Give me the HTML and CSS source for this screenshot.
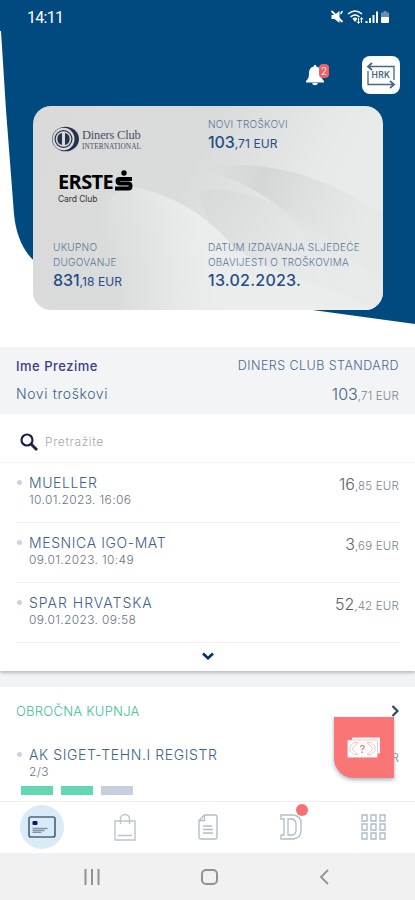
FILE: index.html
```html
<!DOCTYPE html>
<html lang="hr">
<head>
<meta charset="UTF-8">
<meta name="viewport" content="width=device-width, initial-scale=1.0">
<title>Erste Card Club</title>
<link rel="stylesheet" href="styles.css">
</head>
<body>

<div class="app">
    <header class="hero">
        <svg class="hero-bg" viewBox="0 0 415 347">
            <path d="M0 0H415V324L62 276C32 268 17 246 14 214L6 110L1 31H0Z" fill="#004a80"/>
        </svg>

        <div class="status">
            <span>14:11</span>
            <svg width="62" height="16" viewBox="0 0 62 16" fill="#fff">
                <path d="M1 6h3l5-4v12l-5-4H1z"/>
                <path d="M1 2l11 11" stroke="#fff" stroke-width="1.8"/>
                <path d="M10 5l2-3" stroke="#fff" stroke-width="1.4"/>
                <g fill="none" stroke="#fff" stroke-width="1.5">
                    <path d="M17.500 5q7-6 14 0M20 8q4.500-4 9 0"/>
                </g>
                <path d="M22 9.500q2.500-2 5 0L24.500 13z"/>
                <path d="M28 9v5M26.500 12.500L28 14.500l1.500-2M31 14V9M29.800 10.500L31 8.500l1.300 2" stroke="#fff" fill="none"/>
                <path d="M35 12h2v2h-2zM38.500 9h2v5h-2zM42 6h2v8h-2z"/>
                <path d="M45.500 2.500h2V14h-2z"/>
                <path d="M53 2h3v1.500h2.500V8H50.500V3.500H53z" opacity=".4"/>
                <path d="M50.500 8h8v5q0 1-1 1h-6q-1 0-1-1z"/>
            </svg>
        </div>

        <div class="actions">
            <div class="bell">
                <svg width="20" height="22" viewBox="0 0 20 22" fill="#fff">
                    <path d="M10 1c1 0 1.300.700 1.300 1.600C14.500 3.300 16 6 16 9c0 4.500 1 6 3 8v1.500H1V17c2-2 3-3.500 3-8 0-3 1.500-5.700 4.700-6.400C8.700 1.700 9 1 10 1zM7.300 19h5.400c0 3-5.400 3-5.400 0z"/>
                </svg>
                <span class="bell-count">2</span>
            </div>
            <button class="currency">
                <svg width="30" height="28" viewBox="0 0 30 28" fill="none" stroke="#456684" stroke-width="1.300">
                    <path d="M2 5.500H28V19M28 23.500H2V10"/>
                    <path d="M6 2L2 5.500L6 9M24 20L28 23.500L24 27" stroke-width="1.800"/>
                </svg>
                <span>HRK</span>
            </button>
        </div>

        <section class="card">
            <svg class="card-bg" viewBox="0 0 350 204">
                <defs>
                    <linearGradient id="base" x1="0" y1="0" x2="1" y2="0.300">
                        <stop offset="0" stop-color="#dadada"/>
                        <stop offset=".5" stop-color="#dadbdb"/>
                        <stop offset=".85" stop-color="#e8e9e9"/>
                        <stop offset="1" stop-color="#e9ebeb"/>
                    </linearGradient>
                    <linearGradient id="glow" gradientUnits="userSpaceOnUse" x1="70" y1="140" x2="165" y2="115">
                        <stop offset="0" stop-color="#eceded" stop-opacity="0"/>
                        <stop offset="1" stop-color="#ebecec"/>
                    </linearGradient>
                    <linearGradient id="fold" gradientUnits="userSpaceOnUse" x1="170" y1="60" x2="330" y2="120">
                        <stop offset="0" stop-color="#d3d4d4" stop-opacity="0"/>
                        <stop offset=".35" stop-color="#d5d6d6"/>
                        <stop offset="1" stop-color="#e4e6e6" stop-opacity=".5"/>
                    </linearGradient>
                    <linearGradient id="sheet" gradientUnits="userSpaceOnUse" x1="190" y1="90" x2="290" y2="165">
                        <stop offset="0" stop-color="#d8d9d9"/>
                        <stop offset="1" stop-color="#e9ebeb"/>
                    </linearGradient>
                </defs>
                <rect width="350" height="204" fill="url(#base)"/>
                <path d="M165 62Q255 46 350 108V204H305C285 130 250 85 165 62Z" fill="url(#fold)"/>
                <path d="M165 84Q235 76 305 145L350 175V204H220L180 130Z" fill="url(#sheet)" opacity=".7"/>
                <path d="M95 80C140 88 172 108 198 138Q222 158 270 175L350 204H20Q40 110 95 80Z" fill="url(#glow)"/>
            </svg>
            <div class="card-row">
                <div class="logos">
                    <div class="diners">
                        <svg width="29" height="26" viewBox="0 0 29 26">
                            <ellipse cx="14.500" cy="13" rx="13.500" ry="12.300" fill="#26334f"/>
                            <ellipse cx="12.500" cy="13" rx="11" ry="11.300" fill="#dadada"/>
                            <circle cx="12.500" cy="13" r="9" fill="#26334f"/>
                            <circle cx="12.500" cy="13" r="7.800" fill="#dadada"/>
                            <path d="M11 7v12a6.200 6.200 0 0 1 0-12zM14 7v12a6.200 6.200 0 0 0 0-12z" fill="#26334f"/>
                        </svg>
                        <div>
                            <div class="diners-name">Diners Club</div>
                            <div class="diners-sub">INTERNATIONAL</div>
                        </div>
                    </div>
                    <div class="erste">
                        <span>ERSTE</span>
                        <svg width="18" height="22" viewBox="0 0 18 22">
                            <circle cx="9" cy="3" r="2.700"/>
                            <path d="M17 9H4.500Q2.500 9 2.500 11t2 2.500h9Q15.500 13.500 15.500 16T13.500 18.500H0" fill="none" stroke="#000" stroke-width="4"/>
                        </svg>
                    </div>
                    <div class="erste-sub">Card Club</div>
                </div>
                <div>
                    <div class="label">NOVI TROŠKOVI</div>
                    <div class="sum">103<small>,71 EUR</small></div>
                </div>
            </div>
            <div class="card-row">
                <div>
                    <div class="label">UKUPNO<br>DUGOVANJE</div>
                    <div class="sum">831<small>,18 EUR</small></div>
                </div>
                <div>
                    <div class="label">DATUM IZDAVANJA SLJEDEĆE<br>OBAVIJESTI O TROŠKOVIMA</div>
                    <div class="sum date">13.02.2023.</div>
                </div>
            </div>
        </section>
    </header>

    <section class="account">
        <div class="line"><span class="owner">Ime Prezime</span><span class="product">DINERS CLUB STANDARD</span></div>
        <div class="line"><span class="costs">Novi troškovi</span><span class="amount blue">103<small>,71 EUR</small></span></div>
    </section>

    <section class="list">
        <div class="search">
            <svg width="18" height="18" viewBox="0 0 18 18" fill="none" stroke="#1d2145">
                <circle cx="7" cy="7" r="5.500" stroke-width="2.200"/>
                <path d="M11 11l6 6" stroke-width="2.800"/>
            </svg>
            <span>Pretražite</span>
        </div>
        <div class="item">
            <div class="name">MUELLER</div>
            <div class="amount">16<small>,85 EUR</small></div>
            <div class="time">10.01.2023. 16:06</div>
        </div>
        <div class="item">
            <div class="name">MESNICA IGO-MAT</div>
            <div class="amount">3<small>,69 EUR</small></div>
            <div class="time">09.01.2023. 10:49</div>
        </div>
        <div class="item">
            <div class="name spar">SPAR HRVATSKA</div>
            <div class="amount">52<small>,42 EUR</small></div>
            <div class="time">09.01.2023. 09:58</div>
        </div>
        <div class="more">
            <svg width="12" height="9" viewBox="0 0 12 9" fill="none" stroke="#062e70" stroke-width="2.600"><path d="M1 1.500l5 4.800 5-4.800"/></svg>
        </div>
    </section>

    <section class="installments">
        <div class="inst-head">
            <span>OBROČNA KUPNJA</span>
            <svg width="8" height="12" viewBox="0 0 8 12" fill="none" stroke="#2d4860" stroke-width="2.200"><path d="M1.500 1l5 5-5 5"/></svg>
        </div>
        <div class="item inst">
            <div class="name">AK SIGET-TEHN.I REGISTR</div>
            <div class="amount"><small>EUR</small></div>
            <div class="time">2/3</div>
        </div>
        <div class="progress"><i class="done"></i><i class="done"></i><i></i></div>
        <button class="fab">
            <svg width="34" height="21" viewBox="0 0 34 21">
                <rect x="5" y="0.500" width="28" height="16" rx="1" fill="#fff"/>
                <rect x="0.500" y="3" width="30" height="17.500" rx="1" fill="#fff" stroke="#f8a9a9" stroke-width=".7"/>
                <path d="M3 9l4-3.500h4L5 12l6 5.500H7L3 14zM28 9l-4-3.500h-4L26 12l-6 5.500h4L28 14z" fill="none" stroke="#f9b4b4" stroke-width=".8"/>
                <text x="15.500" y="16" text-anchor="middle">?</text>
            </svg>
        </button>
    </section>

    <nav class="tabs">
        <div class="tab active">
            <svg width="28" height="22" viewBox="0 0 28 22">
                <rect x="1" y="1" width="26" height="20" rx="2" fill="none" stroke="#536779" stroke-width="1.700"/>
                <rect x="4.500" y="5" width="5" height="4" rx="1" fill="#10156b"/>
                <path d="M4.500 12.500h15M4.500 14.500h12M4.500 16.300h9" stroke="#8296a5" stroke-width="1.300"/>
            </svg>
        </div>
        <div class="tab">
            <svg width="24" height="28" viewBox="0 0 24 28" fill="none" stroke="#bac4cc" stroke-width="1.400">
                <path d="M2 8h20v19H2zM7.500 11V6a4.500 4.500 0 0 1 9 0v5M5 22.500h14"/>
            </svg>
        </div>
        <div class="tab">
            <svg width="20" height="26" viewBox="0 0 20 26" fill="none" stroke="#b2bec8" stroke-width="1.400">
                <path d="M6.500 1H17q2 0 2 2v20q0 2-2 2H3q-2 0-2-2V6.500zM6.500 1v5.500H1M5 12h9M5 15.500h10M5 19h10"/>
            </svg>
        </div>
        <div class="tab">
            <svg width="22" height="26" viewBox="0 0 22 26" fill="none" stroke="#afbdc9" stroke-width="1.300">
                <path d="M1 1h12q8 1 8 8v8q0 7-8 8H1v-4h3V5H1zM8 5v16h4q4-.500 4-5v-6q0-4.500-4-5z"/>
            </svg>
            <span class="dot"></span>
        </div>
        <div class="tab">
            <svg width="25" height="26" viewBox="0 0 25 26" fill="none" stroke="#b0bcc8" stroke-width="1.400">
                <path d="M1 1h5v6H1zM10 1h5v6h-5zM19 1h5v6h-5zM1 10h5v6H1zM10 10h5v6h-5zM19 10h5v6h-5zM1 19h5v6H1zM10 19h5v6h-5zM19 19h5v6h-5z"/>
            </svg>
        </div>
    </nav>

    <div class="system">
        <svg width="16" height="16" viewBox="0 0 16 16" stroke="#929292" stroke-width="2"><path d="M1.500 0v16M8 0v16M14.500 0v16"/></svg>
        <svg width="17" height="16" viewBox="0 0 17 16" fill="none" stroke="#929292" stroke-width="2"><rect x="1" y="1" width="15" height="14" rx="4"/></svg>
        <svg width="10" height="16" viewBox="0 0 10 16" fill="none" stroke="#929292" stroke-width="1.800"><path d="M9 1L2 8l7 7"/></svg>
    </div>
</div>

</body>
</html>
```

FILE: styles.css
```css
* {
    box-sizing: border-box;
}
body {
    margin: 0;
    background-color: #fff;
    font-family: "Inter", "Liberation Sans", sans-serif;
    font-weight: 300;
    color: #69747f;
}
button {
    border: none;
    padding: 0;
    font-family: inherit;
}
svg {
    display: block;
    flex: none;
}
.app {
    width: 415px;
    height: 900px;
    overflow: hidden;
    display: flex;
    flex-direction: column;
}

/* header */
.hero {
    position: relative;
    height: 347px;
    flex: none;
}
.hero-bg {
    position: absolute;
    top: 0;
    left: 0;
    width: 415px;
    height: 347px;
}
.status {
    position: relative;
    height: 34px;
    padding: 0 22px 0 27px;
    display: flex;
    justify-content: space-between;
    align-items: center;
    color: #fff;
    font-family: Roboto, sans-serif;
    font-size: 16px;
    font-weight: 400;
    letter-spacing: -0.7px;
}
.status svg {
    width: 63px;
}
.actions {
    position: relative;
    height: 72px;
    padding: 22px 15px 0 0;
    display: flex;
    justify-content: flex-end;
    gap: 37px;
}
.bell {
    position: relative;
    width: 20px;
    margin-top: 8px;
}
.bell-count {
    position: absolute;
    top: 0;
    left: 14px;
    width: 10px;
    height: 14px;
    border-radius: 4px;
    background-color: #ee6265;
    color: #fff;
    font-size: 10px;
    line-height: 14px;
    text-align: center;
}
.currency {
    position: relative;
    width: 38px;
    height: 38px;
    border-radius: 8px;
    background-color: #fff;
    display: grid;
    place-items: center;
}
.currency > * {
    grid-area: 1 / 1;
}
.currency span {
    font-size: 8.5px;
    font-weight: 600;
    color: #456684;
    letter-spacing: 0.3px;
}

/* card */
.card {
    position: relative;
    width: 350px;
    height: 204px;
    margin-left: 33px;
    padding: 11px 0 18px 20px;
    border-radius: 18px;
    overflow: hidden;
    display: flex;
    flex-direction: column;
    justify-content: space-between;
    color: #234d87;
}
.card-bg {
    position: absolute;
    top: 0;
    left: 0;
    width: 350px;
    height: 204px;
}
.card-row {
    position: relative;
    display: grid;
    grid-template-columns: 155px 1fr;
    white-space: nowrap;
}
.label {
    font-size: 10px;
    line-height: 15px;
    letter-spacing: 0.27px;
    color: #58769a;
}
.sum {
    font-size: 16px;
    font-weight: 500;
    line-height: 20px;
    letter-spacing: -0.1px;
}
.sum small {
    font-size: 12px;
    font-weight: 400;
    letter-spacing: 0.1px;
}
.sum.date {
    letter-spacing: 0.25px;
}
.diners {
    display: flex;
    gap: 2px;
    margin: 9px 0 0 -2px;
    color: #465164;
    font-family: "Liberation Serif", serif;
    font-weight: 400;
}
.diners-name {
    font-size: 12.5px;
    line-height: 15px;
    margin-top: 2px;
    letter-spacing: -0.2px;
}
.diners-sub {
    font-size: 7.3px;
    line-height: 8px;
    letter-spacing: 0.05px;
}
.erste {
    display: flex;
    align-items: flex-end;
    gap: 2px;
    margin: 18px 0 0 5px;
    color: #000;
    font-family: "Open Sans", sans-serif;
    font-size: 20px;
    font-weight: 700;
    line-height: 20px;
    letter-spacing: -0.6px;
}
.erste-sub {
    margin: 1px 0 0 5px;
    color: #333;
    font-size: 8.5px;
    font-weight: 400;
    line-height: 12px;
    letter-spacing: -0.1px;
}

/* account summary */
.account {
    height: 67px;
    flex: none;
    padding: 8px 16px 0;
    background-color: #f2f4f6;
}
.line {
    display: flex;
    justify-content: space-between;
    align-items: center;
    height: 21px;
    margin-bottom: 7px;
}
.owner {
    font-size: 13px;
    font-weight: 500;
    color: #383d84;
    letter-spacing: 0.5px;
}
.product {
    font-size: 12.5px;
    color: #4b6b8e;
    letter-spacing: 0.45px;
}
.costs {
    font-size: 14px;
    color: #3d6288;
    letter-spacing: 0.6px;
}
.amount {
    font-size: 16px;
    color: #5c6167;
}
.amount.blue {
    color: #456284;
}
.amount small {
    font-size: 11.5px;
    color: #7c838a;
    letter-spacing: 0.2px;
}

/* transactions */
.list {
    position: relative;
    z-index: 1;
    height: 257px;
    flex: none;
    background-color: #fff;
    box-shadow: 0 2px 3px #b9bcc0;
    clip-path: inset(0 0 -8px 0);
}
.search {
    height: 49px;
    padding: 7px 0 0 20px;
    border-bottom: 1px solid #f3f4f5;
    display: flex;
    align-items: center;
    gap: 7px;
    font-size: 12px;
    color: #a5a8ab;
    letter-spacing: 0.6px;
}
.item {
    position: relative;
    height: 60px;
    margin: 0 16px;
    padding: 9px 0 0 13px;
    border-bottom: 1px solid #eeeff1;
    display: grid;
    grid-template-columns: 1fr auto;
    grid-template-rows: 20px 14px;
    align-items: center;
}
.item::before {
    content: "";
    position: absolute;
    left: 1px;
    top: 17px;
    width: 5px;
    height: 5px;
    border-radius: 50%;
    background-color: #cfd0e0;
}
.name {
    font-size: 14px;
    color: #40618a;
    letter-spacing: 0.6px;
}
.name.spar {
    letter-spacing: 1px;
}
.item .amount {
    padding-top: 4px;
}
.time {
    font-size: 12px;
    letter-spacing: 0.35px;
}
.more {
    display: flex;
    justify-content: center;
    padding-top: 9px;
}

/* installments */
.installments {
    position: relative;
    height: 130px;
    flex: none;
    border-top: 16px solid #f1f3f5;
}
.inst-head {
    height: 48px;
    padding: 0 16px;
    display: flex;
    align-items: center;
    justify-content: space-between;
    font-size: 13px;
    color: #3dbf94;
    letter-spacing: 0.25px;
}
.item.inst {
    height: 51px;
    border-bottom: none;
}
.progress {
    display: flex;
    gap: 8px;
    padding-left: 21px;
}
.progress i {
    width: 32px;
    height: 9px;
    background-color: #c7cfdf;
}
.progress i.done {
    background-color: #63d6b4;
}
.fab {
    position: absolute;
    right: 21px;
    top: 30px;
    width: 60px;
    height: 61px;
    border-radius: 0 0 0 20px;
    background-color: #fa7576;
    box-shadow: 0 2px 4px #a9b3c1;
    display: grid;
    place-items: center;
}
.fab text {
    font-size: 11px;
    font-weight: 500;
    fill: #ed7678;
}

/* bottom bars */
.tabs {
    height: 52px;
    flex: none;
    background-color: #fff;
    border-top: 1px solid #eceeef;
    display: grid;
    grid-template-columns: repeat(5, 83px);
    padding-top: 3px;
}
.tab {
    position: relative;
    width: 44px;
    height: 44px;
    justify-self: center;
    display: grid;
    place-items: center;
    border-radius: 50%;
}
.tab.active {
    background-color: #d9ebf8;
}
.dot {
    position: absolute;
    top: -1px;
    left: 27px;
    width: 12px;
    height: 12px;
    border-radius: 50%;
    background-color: #fa7072;
}
.system {
    flex: 1;
    background-color: #f1f1f1;
    display: flex;
    align-items: center;
    justify-content: space-between;
    padding: 0 86px 0 84px;
}
```
